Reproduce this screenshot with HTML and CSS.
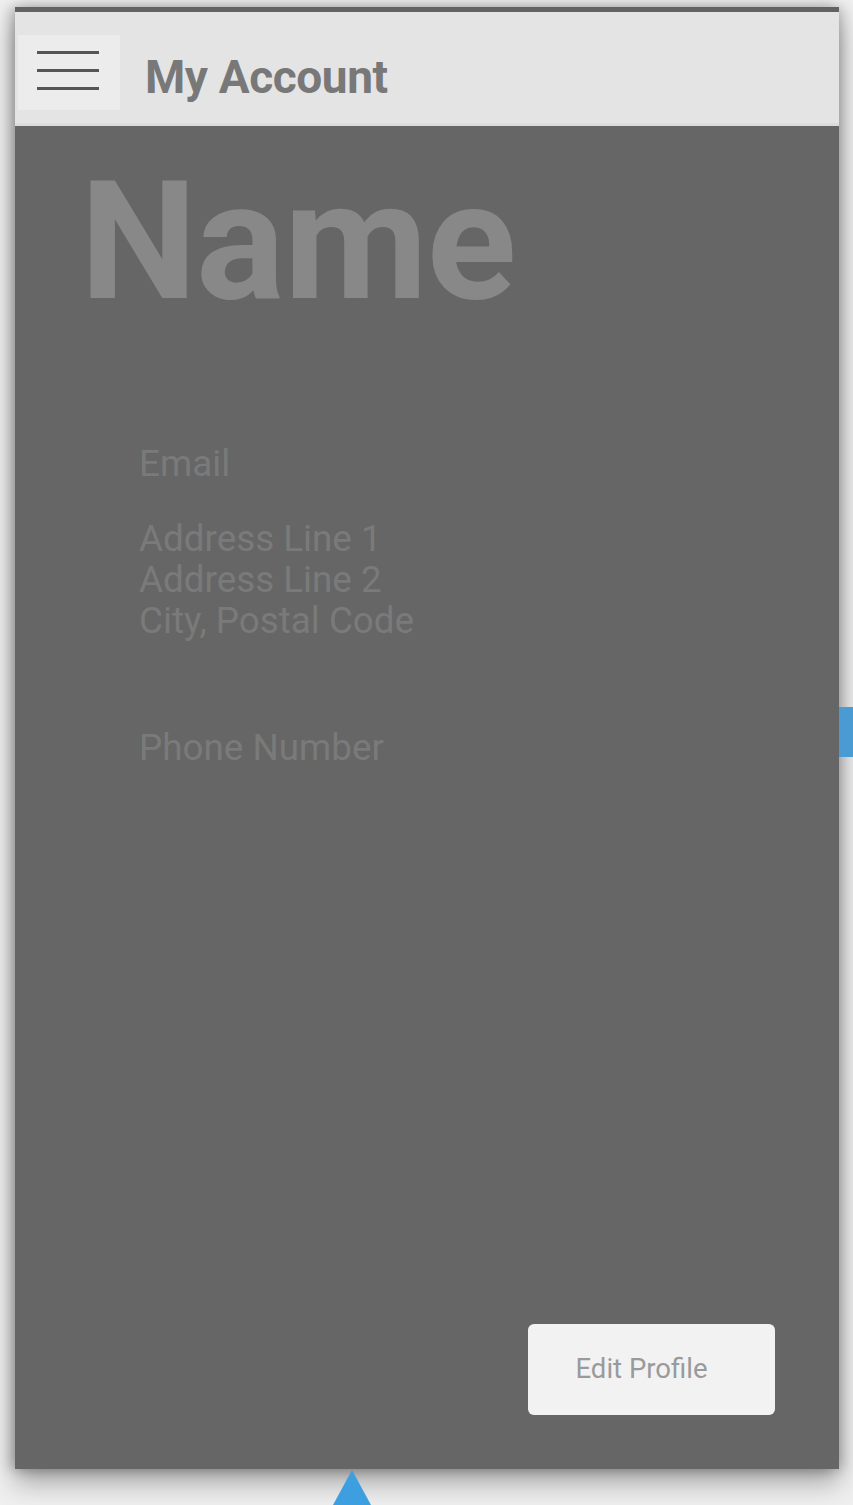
FILE: index.html
```html
<!DOCTYPE html>
<html>
<head>
<meta charset="utf-8">
<link rel="stylesheet" href="styles.css">
</head>
<body>
<div class="frame">
  <header class="header">
    <div class="menu-btn">
      <span class="bar"></span>
      <span class="bar"></span>
      <span class="bar"></span>
    </div>
    <h1 class="title">My Account</h1>
  </header>
  <main class="content">
    <h2 class="name">Name</h2>
    <div class="info">
      <p class="email">Email</p>
      <p class="address">Address Line 1<br>Address Line 2<br>City, Postal Code</p>
      <p class="phone">Phone Number</p>
    </div>
    <button class="edit-btn">Edit Profile</button>
  </main>
</div>
<div class="side-tab"></div>
<div class="pointer"></div>
</body>
</html>
```
FILE: styles.css
```css
html, body {
  margin: 0;
  padding: 0;
}
body {
  background: #efefef;
  width: 853px;
  height: 1505px;
  overflow: hidden;
  position: relative;
  font-family: Roboto, "Liberation Sans", sans-serif;
}
.frame {
  margin: 7px 0 0 15px;
  width: 824px;
  height: 1462px;
  background: #666666;
  border-top: 5px solid #626262;
  box-sizing: border-box;
  display: flex;
  flex-direction: column;
  box-shadow: 0 14px 24px rgba(0,0,0,0.30), -5px 0 12px rgba(0,0,0,0.22), 5px 0 12px rgba(0,0,0,0.15);
}
.header {
  height: 114px;
  flex: none;
  background: #e4e4e4;
  border-bottom: 3px solid #dcdcdc;
  box-sizing: border-box;
  display: flex;
  align-items: flex-start;
  padding-top: 23px;
}
.menu-btn {
  width: 102px;
  height: 75px;
  margin-left: 3px;
  background: #ececec;
  display: flex;
  flex-direction: column;
  gap: 15px;
  padding: 16px 0 0 19px;
  box-sizing: border-box;
}
.bar {
  display: block;
  width: 62px;
  height: 3px;
  background: #555555;
}
.title {
  margin: 19px 0 0 25px;
  font-size: 46px;
  line-height: 1;
  font-weight: 700;
  color: #787878;
  letter-spacing: -0.4px;
}
.content {
  flex: 1;
  display: flex;
  flex-direction: column;
}
.name {
  margin: 18px 0 0 65px;
  font-size: 166px;
  font-weight: 700;
  line-height: normal;
  color: #888888;
  letter-spacing: -1px;
}
.info {
  margin: 104px 0 0 124px;
  color: #7a7a7a;
  font-size: 36.8px;
}
.info p {
  margin: 0;
}
.email {
  line-height: 42px;
}
.address {
  margin-top: 33px !important;
  line-height: 41px;
}
.phone {
  margin-top: 86px !important;
  line-height: 42px;
}
.edit-btn {
  margin: auto 64px 54px auto;
  width: 247px;
  height: 91px;
  background: #f2f2f2;
  border: none;
  border-radius: 6px;
  font-family: Roboto, "Liberation Sans", sans-serif;
  font-size: 27.5px;
  color: #9a9a9a;
  padding: 0 20px 2px 0;
}
.side-tab {
  position: absolute;
  left: 839px;
  top: 707px;
  width: 14px;
  height: 50px;
  background: #4a9ad4;
}
.pointer {
  position: absolute;
  left: 333px;
  top: 1470px;
  width: 0;
  height: 0;
  border-left: 19px solid transparent;
  border-right: 19px solid transparent;
  border-bottom: 35px solid #3d9fe0;
}
```
